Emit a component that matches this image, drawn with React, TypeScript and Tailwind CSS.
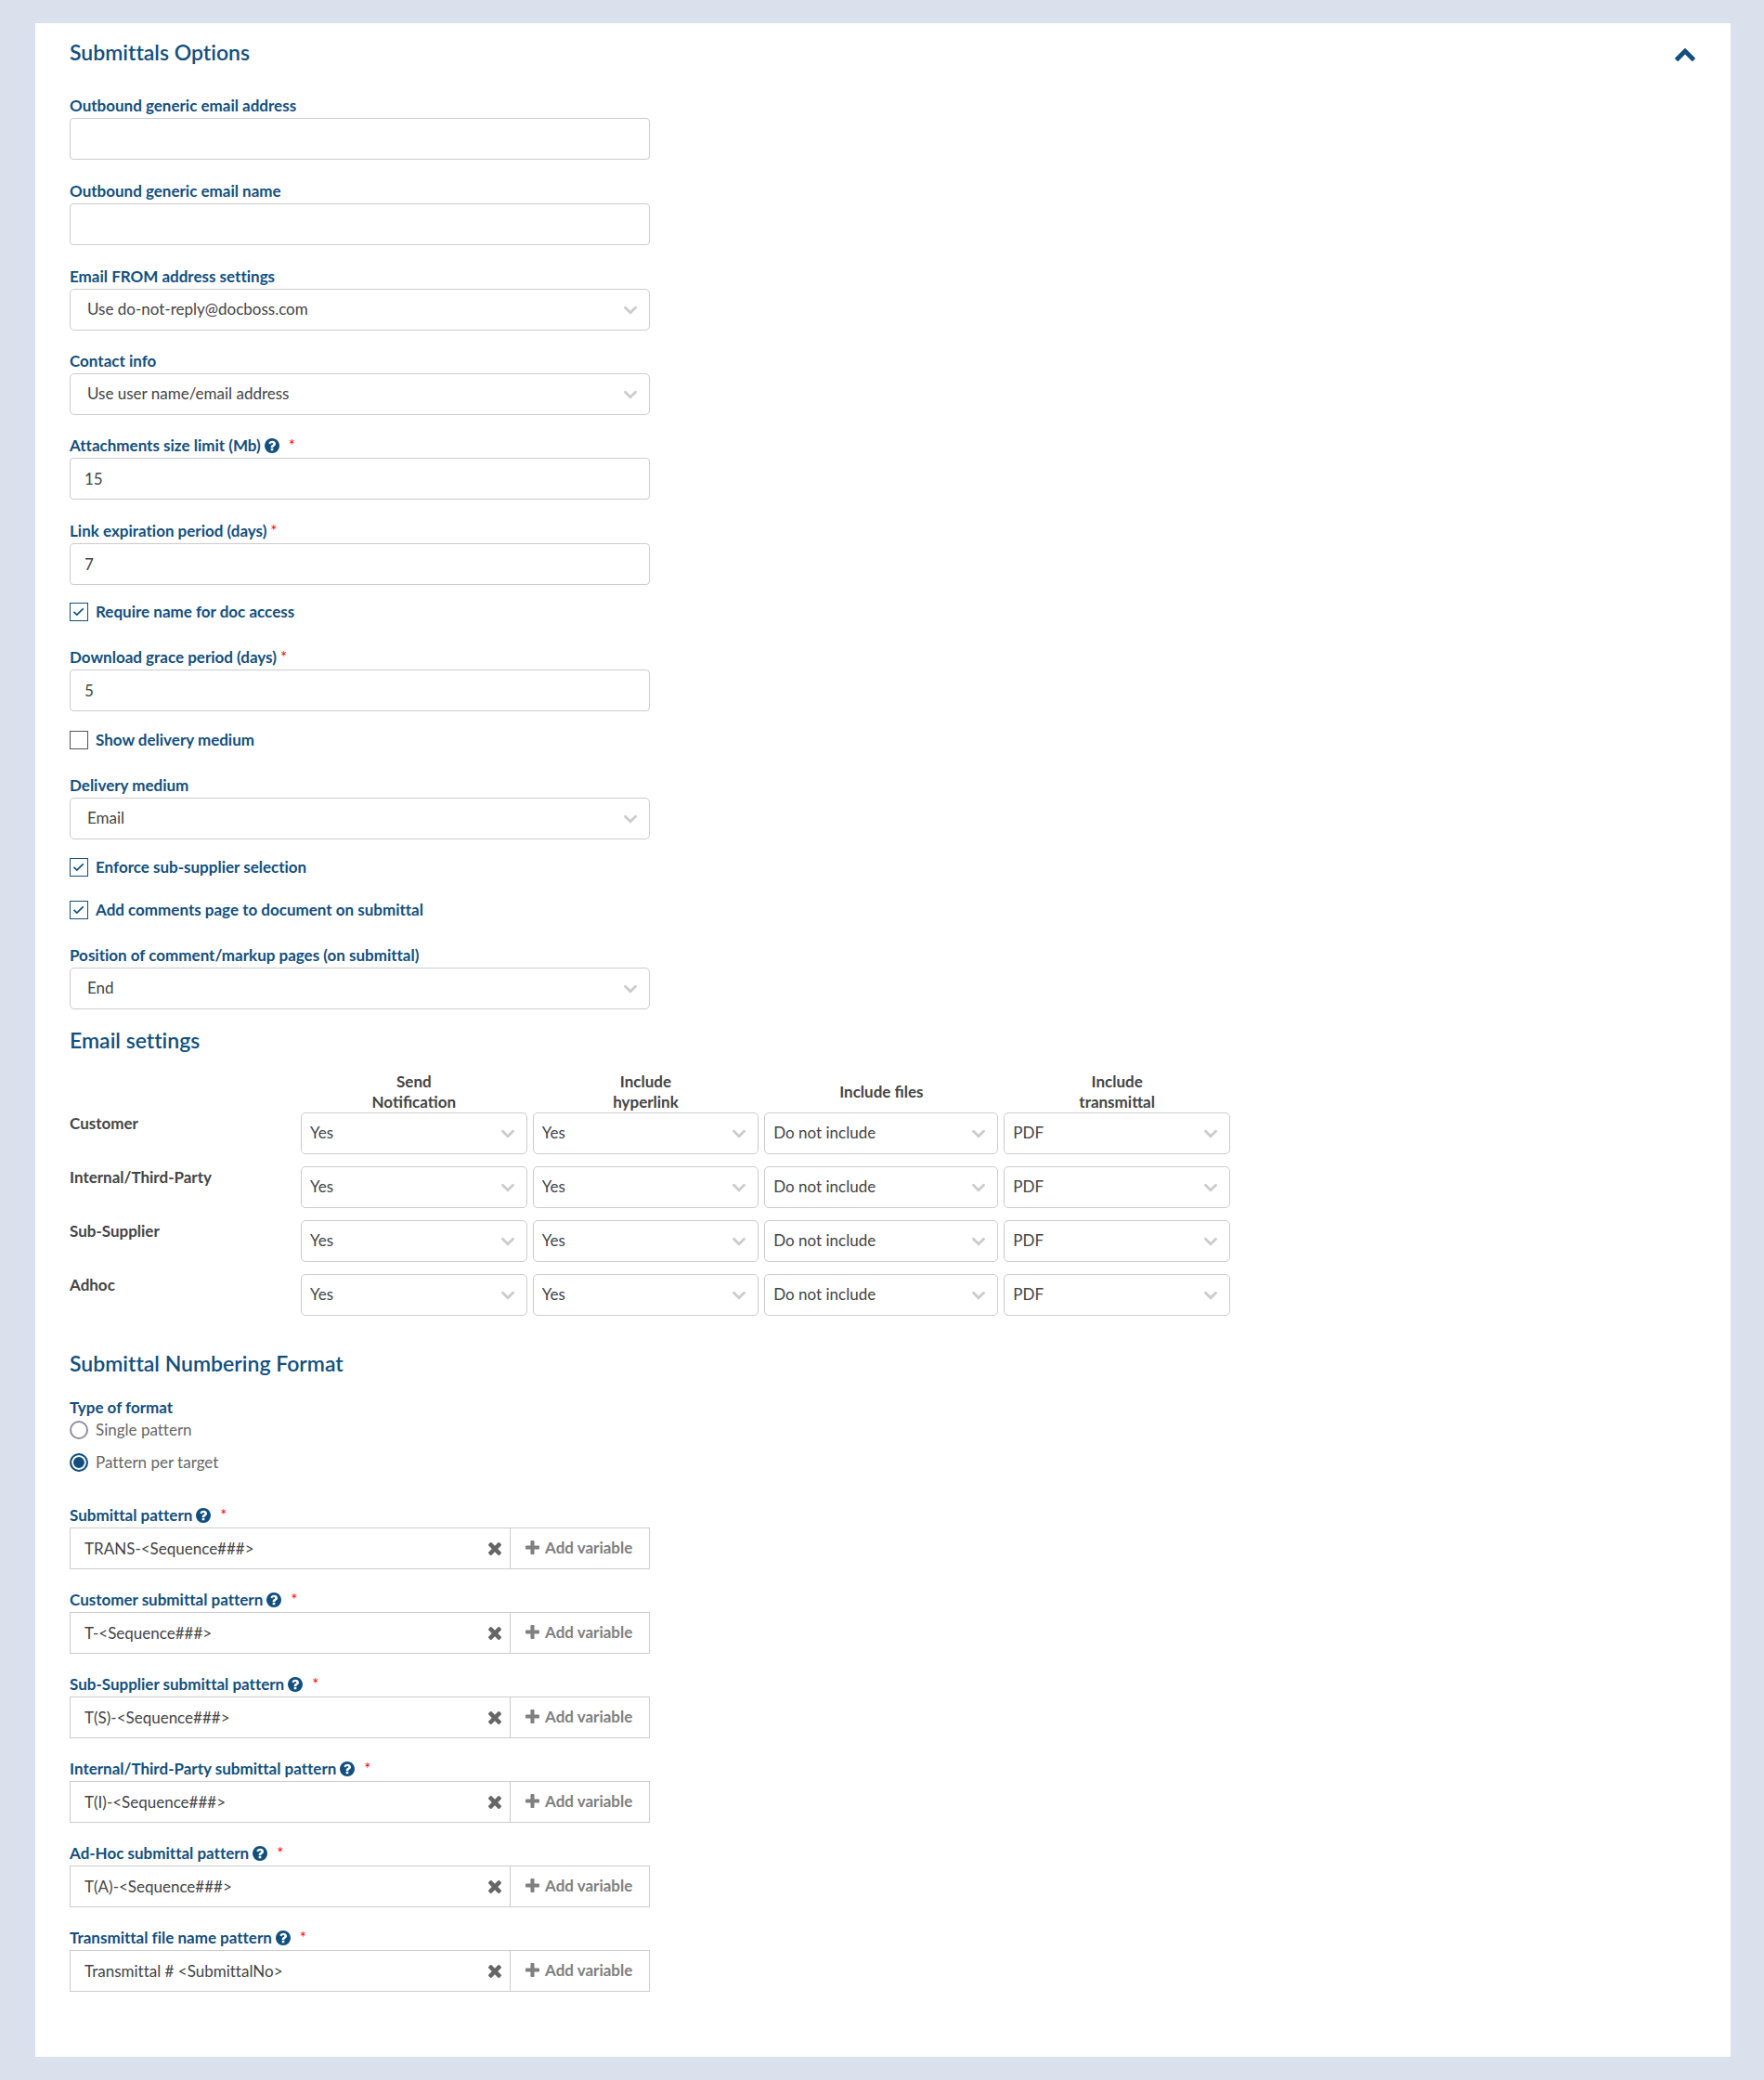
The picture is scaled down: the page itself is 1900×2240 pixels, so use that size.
import React, { useState } from 'react';

const FONT = "font-[Lato,'Liberation_Sans',sans-serif]";

interface IconProps {
    className?: string;
}

const QuestionIcon: React.FC<IconProps> = ({ className }) => (
    <svg viewBox="128 128 1536 1536" fill="currentColor" className={className} aria-hidden="true">
        <path d="M1024 1376v-192q0-14-9-23t-23-9h-192q-14 0-23 9t-9 23v192q0 14 9 23t23 9h192q14 0 23-9t9-23zm256-672q0-88-55.500-163t-138.500-116-170-41q-243 0-371 213-15 24 8 42l132 100q7 6 19 6 16 0 25-12 53-68 86-92 34-24 86-24 48 0 85.500 26t37.500 59q0 38-20 61t-68 45q-63 28-115.500 86.500t-52.500 125.500v36q0 14 9 23t23 9h192q14 0 23-9t9-23q0-19 21.500-49.500t54.500-49.500q32-18 49-28.500t46-35 44.500-48 28-60.500 12.500-81zm384 192q0 209-103 385.500t-279.500 279.500-385.500 103-385.500-103-279.500-279.500-103-385.500 103-385.500 279.500-279.500 385.500-103 385.500 103 279.500 279.500 103 385.500z" />
    </svg>
);

const PlusIcon: React.FC<IconProps> = ({ className }) => (
    <svg viewBox="192 128 1408 1408" fill="currentColor" className={className} aria-hidden="true">
        <path d="M1600 736v192q0 40-28 68t-68 28h-416v416q0 40-28 68t-68 28h-192q-40 0-68-28t-28-68v-416h-416q-40 0-68-28t-28-68v-192q0-40 28-68t68-28h416v-416q0-40 28-68t68-28h192q40 0 68 28t28 68v416h416q40 0 68 28t28 68z" />
    </svg>
);

const TimesIcon: React.FC<IconProps> = ({ className }) => (
    <svg viewBox="302 366 1188 1188" fill="currentColor" className={className} aria-hidden="true">
        <path d="M1490 1322q0 40-28 68l-136 136q-28 28-68 28t-68-28l-294-294-294 294q-28 28-68 28t-68-28l-136-136q-28-28-28-68t28-68l294-294-294-294q-28-28-28-68t28-68l136-136q28-28 68-28t68 28l294 294 294-294q28-28 68-28t68 28l136 136q28 28 28 68t-28 68l-294 294 294 294q28 28 28 68z" />
    </svg>
);

const ChevronUpIcon: React.FC<IconProps> = ({ className }) => (
    <svg viewBox="90 480 1612 1035" fill="currentColor" className={className} aria-hidden="true">
        <path d="M1683 1331l-166 165q-19 19-45 19t-45-19l-531-531-531 531q-19 19-45 19t-45-19l-166-165q-19-19-19-45.500t19-45.500l742-741q19-19 45-19t45 19l742 741q19 19 19 45.500t-19 45.500z" />
    </svg>
);

const SelectArrow: React.FC = () => (
    <svg
        viewBox="0 0 14 10"
        fill="none"
        stroke="#cccccc"
        strokeWidth="2.8"
        strokeLinecap="round"
        className="pointer-events-none absolute right-3.5 top-[18px] h-2.5 w-3.5"
        aria-hidden="true"
    >
        <path d="M1.500 2.200l5.500 5.600 5.500-5.600" />
    </svg>
);

interface LabelProps {
    id: string;
    label: string;
    help?: boolean;
    required?: boolean;
}

const FieldLabel: React.FC<LabelProps> = ({ id, label, help, required }) => (
    <label htmlFor={id} className="flex h-6 items-center pb-0.5 text-[17px] leading-[22px] font-bold text-[#124f7e] [font-variant-ligatures:none]">
        {label}
        {help && <QuestionIcon className="ml-1 size-4" />}
        {required && <span className={`font-normal text-[#ff0000] ${help ? 'ml-2.5' : 'ml-1'}`}>*</span>}
    </label>
);

interface TextFieldProps extends LabelProps {
    value?: string;
}

const TextField: React.FC<TextFieldProps> = ({ value = '', ...label }) => {
    const [text, setText] = useState(value);

    return (
        <div className="pb-px">
            <FieldLabel {...label} />
            <input
                id={label.id}
                type="text"
                value={text}
                onChange={(e) => setText(e.target.value)}
                className="block h-[45px] w-full rounded-sm border border-[#cccccc] bg-white px-[15px] text-[17px] text-[#444444]"
            />
        </div>
    );
};

interface SelectFieldProps extends LabelProps {
    options: string[];
}

const SelectField: React.FC<SelectFieldProps> = ({ options, ...label }) => (
    <div>
        <FieldLabel {...label} />
        <div className="relative">
            <select
                id={label.id}
                className="block h-[45px] w-full appearance-none rounded-[5px] border border-[#cccccc] bg-white pr-10 pb-0.5 pl-[18px] text-[17px] text-[#444444] [font-variant-ligatures:none]"
            >
                {options.map((option) => (
                    <option key={option}>{option}</option>
                ))}
            </select>
            <SelectArrow />
        </div>
    </div>
);

interface CheckFieldProps {
    label: string;
    checked?: boolean;
}

const CheckField: React.FC<CheckFieldProps> = ({ label, checked = false }) => {
    const [on, setOn] = useState(checked);

    return (
        <label className="flex h-6 w-fit items-center gap-2 text-[17px] leading-6 font-bold text-[#124f7e] [font-variant-ligatures:none]">
            <span className="relative size-5">
                <input
                    type="checkbox"
                    checked={on}
                    onChange={(e) => setOn(e.target.checked)}
                    className="block size-5 appearance-none border border-[#555555] bg-white checked:border-[#124f7e]"
                />
                {on && (
                    <svg
                        viewBox="0 0 20 20"
                        fill="none"
                        stroke="#124f7e"
                        strokeWidth="1.7"
                        className="pointer-events-none absolute inset-0 size-5"
                        aria-hidden="true"
                    >
                        <path d="M4.500 9.800l3.300 3.300 6.900-6.800" />
                    </svg>
                )}
            </span>
            {label}
        </label>
    );
};

const PatternField: React.FC<TextFieldProps> = ({ value = '', ...label }) => {
    const [text, setText] = useState(value);

    return (
        <div>
            <FieldLabel {...label} help required />
            <div className="flex h-[45px] border border-[#cccccc] bg-white">
                <input
                    id={label.id}
                    type="text"
                    value={text}
                    onChange={(e) => setText(e.target.value)}
                    className="min-w-0 flex-1 pl-[15px] text-[17px] text-[#444444] [font-variant-ligatures:none]"
                />
                <button type="button" aria-label="Clear" onClick={() => setText('')} className="px-[9px] text-[#666666]">
                    <TimesIcon className="size-3.5" />
                </button>
                <button
                    type="button"
                    className="flex w-[150px] items-center gap-1.5 border-l border-[#cccccc] pb-0.5 pl-4 text-[17px] font-bold text-[#808080]"
                >
                    <PlusIcon className="size-[15px]" />
                    Add variable
                </button>
            </div>
        </div>
    );
};

const SectionTitle: React.FC<{ children: React.ReactNode }> = ({ children }) => (
    <h2 className="text-[23px] leading-8 font-semibold text-[#124f7e] [font-variant-ligatures:none]">{children}</h2>
);

const targets = ['Customer', 'Internal/Third-Party', 'Sub-Supplier', 'Adhoc'];

const columns = [
    { title: ['Send', 'Notification'], options: ['Yes', 'No'] },
    { title: ['Include', 'hyperlink'], options: ['Yes', 'No'] },
    { title: ['Include files'], options: ['Do not include', 'Include'] },
    { title: ['Include', 'transmittal'], options: ['PDF', 'None'] },
];

const EmailTable: React.FC = () => (
    <table className="w-full max-w-[1253px] table-fixed border-collapse text-[17px] text-[#444444]">
        <colgroup>
            <col className="w-[246px]" />
            <col />
            <col />
            <col className="w-[258px]" />
            <col />
        </colgroup>
        <thead>
            <tr>
                <td />
                {columns.map((column) => (
                    <th key={column.title.join(' ')} scope="col" className="p-0 text-center align-middle leading-[22px] font-bold">
                        {column.title.map((line) => (
                            <span key={line} className="block">{line}</span>
                        ))}
                    </th>
                ))}
            </tr>
        </thead>
        <tbody>
            {targets.map((target) => (
                <tr key={target}>
                    <th scope="row" className="p-0 text-left align-top leading-6 font-bold">{target}</th>
                    {columns.map((column) => (
                        <td key={column.title.join(' ')} className="px-[3px] pt-0 pb-[13px]">
                            <div className="relative">
                                <select
                                    aria-label={`${target} ${column.title.join(' ')}`}
                                    className="block h-[45px] w-full appearance-none rounded-[5px] border border-[#cccccc] bg-white pr-10 pb-0.5 pl-[9px]"
                                >
                                    {column.options.map((option) => (
                                        <option key={option}>{option}</option>
                                    ))}
                                </select>
                                <SelectArrow />
                            </div>
                        </td>
                    ))}
                </tr>
            ))}
        </tbody>
    </table>
);

const patterns = [
    { id: 'submittal', label: 'Submittal pattern', value: 'TRANS-<Sequence###>' },
    { id: 'customer', label: 'Customer submittal pattern', value: 'T-<Sequence###>' },
    { id: 'sub-supplier', label: 'Sub-Supplier submittal pattern', value: 'T(S)-<Sequence###>' },
    { id: 'internal', label: 'Internal/Third-Party submittal pattern', value: 'T(I)-<Sequence###>' },
    { id: 'ad-hoc', label: 'Ad-Hoc submittal pattern', value: 'T(A)-<Sequence###>' },
    { id: 'transmittal', label: 'Transmittal file name pattern', value: 'Transmittal # <SubmittalNo>' },
];

const App: React.FC = () => {
    const [open, setOpen] = useState(true);
    const [format, setFormat] = useState('Pattern per target');

    return (
        <div className={`min-h-screen bg-[#dbe1ec] pt-[25px] pr-9 pb-[25px] pl-[38px] ${FONT}`}>
            <main className="bg-white px-[37px] pt-[15px] pb-[70px]">
                <header className="flex items-center justify-between">
                    <SectionTitle>Submittals Options</SectionTitle>
                    <button
                        type="button"
                        aria-label="Toggle section"
                        aria-expanded={open}
                        onClick={() => setOpen(!open)}
                        className="pt-1.5 pr-px text-[#124f7e]"
                    >
                        <ChevronUpIcon className={`h-3.5 w-[22px] ${open ? '' : 'rotate-180'}`} />
                    </button>
                </header>

                {open && (
                    <>
                        <div className="mt-[31px] max-w-[625px]">
                            <div className="flex flex-col gap-[22px]">
                                <TextField id="email-address" label="Outbound generic email address" />
                                <TextField id="email-name" label="Outbound generic email name" />
                                <SelectField id="from" label="Email FROM address settings" options={['Use do-not-reply@docboss.com']} />
                                <SelectField id="contact" label="Contact info" options={['Use user name/email address']} />
                                <TextField id="size-limit" label="Attachments size limit (Mb)" value="15" help required />
                                <TextField id="expiration" label="Link expiration period (days)" value="7" required />
                            </div>
                            <div className="mt-4 mb-[26px]">
                                <CheckField label="Require name for doc access" checked />
                            </div>
                            <TextField id="grace" label="Download grace period (days)" value="5" required />
                            <div className="mt-[18px] mb-[26px]">
                                <CheckField label="Show delivery medium" />
                            </div>
                            <SelectField id="medium" label="Delivery medium" options={['Email']} />
                            <div className="mt-[18px] mb-[26px] flex flex-col gap-[22px]">
                                <CheckField label="Enforce sub-supplier selection" checked />
                                <CheckField label="Add comments page to document on submittal" checked />
                            </div>
                            <SelectField id="position" label="Position of comment/markup pages (on submittal)" options={['End', 'Start']} />
                        </div>

                        <section className="mt-[17px]">
                            <SectionTitle>Email settings</SectionTitle>
                            <div className="mt-[18px]">
                                <EmailTable />
                            </div>
                        </section>

                        <section className="mt-[22px] max-w-[625px]">
                            <SectionTitle>Submittal Numbering Format</SectionTitle>
                            <fieldset className="mt-5">
                                <legend className="text-[17px] leading-6 font-bold text-[#124f7e]">Type of format</legend>
                                <div className="flex flex-col gap-[11px]">
                                    {['Single pattern', 'Pattern per target'].map((name) => (
                                        <label key={name} className="flex h-6 w-fit items-center gap-2 text-[17px] leading-6 text-[#666666] [font-variant-ligatures:none]">
                                            <input
                                                type="radio"
                                                name="format"
                                                checked={format === name}
                                                onChange={() => setFormat(name)}
                                                className="size-5 appearance-none rounded-full border-2 border-[#8f8f9d] bg-white checked:border-[#124f7e] checked:bg-[#124f7e] checked:shadow-[inset_0_0_0_2px_white]"
                                            />
                                            {name}
                                        </label>
                                    ))}
                                </div>
                            </fieldset>
                            <div className="mt-[34px] flex flex-col gap-[22px]">
                                {patterns.map((pattern) => (
                                    <PatternField key={pattern.id} {...pattern} />
                                ))}
                            </div>
                        </section>
                    </>
                )}
            </main>
        </div>
    );
};

export default App;
